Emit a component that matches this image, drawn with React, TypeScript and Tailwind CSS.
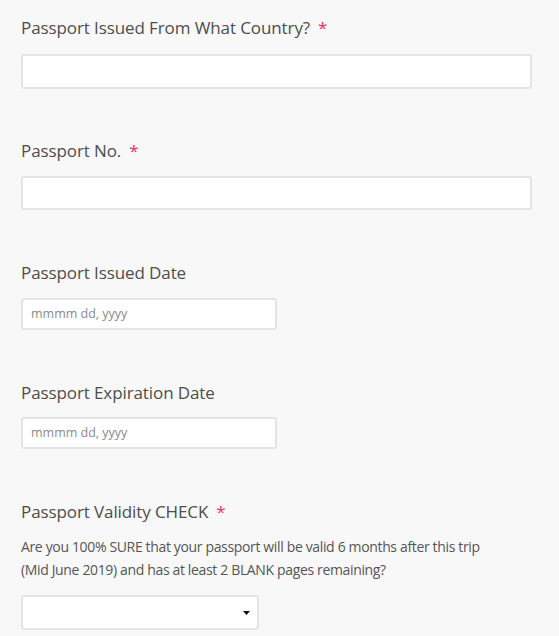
import React from "react";

const font = { fontFamily: '"Open Sans", "Noto Sans", sans-serif' };

function Label({ text, required }: { text: string; required?: boolean }) {
  return (
    <div className="text-[17px] leading-[24px] tracking-[-0.1px] text-[#4d4d4d]">
      {text}
      {required && <span className="ml-[8px] text-[#ec2f67]">*</span>}
    </div>
  );
}

export default function App() {
  return (
    <div className="min-h-[636px] w-full bg-[#f8f8f8] pl-[21px] pr-[27px] pt-[16px]" style={font}>
      <Label text="Passport Issued From What Country?" required />
      <div className="mt-[14px] h-[35px] w-full rounded-[3px] border-2 border-[#e4e4e4] bg-white" />

      <div className="mt-[50px]">
        <Label text="Passport No." required />
      </div>
      <div className="mt-[13px] h-[34px] w-full rounded-[3px] border-2 border-[#e4e4e4] bg-white" />

      <div className="mt-[51px]">
        <Label text="Passport Issued Date" />
      </div>
      <div className="mt-[13px] flex h-[32px] w-[256px] items-center rounded-[3px] border-2 border-[#e4e4e4] bg-white pl-[8px] text-[12.5px] text-[#8a8a8a]">
        mmmm dd, yyyy
      </div>

      <div className="mt-[51px]">
        <Label text="Passport Expiration Date" />
      </div>
      <div className="mt-[12px] flex h-[32px] w-[256px] items-center rounded-[3px] border-2 border-[#e4e4e4] bg-white pl-[8px] text-[12.5px] text-[#8a8a8a]">
        mmmm dd, yyyy
      </div>

      <div className="mt-[51px]">
        <Label text="Passport Validity CHECK" required />
      </div>
      <div className="mt-[11px] text-[14px] leading-[23px] tracking-[-0.35px] text-[#555]">
        Are you 100% SURE that your passport will be valid 6 months after this trip
        <br />
        (Mid June 2019) and has at least 2 BLANK pages remaining?
      </div>
      <div className="mt-[14px] flex h-[35px] w-[238px] items-center justify-end rounded-[3px] border-2 border-[#e4e4e4] bg-white pr-[7px]">
        <svg width="7" height="4" viewBox="0 0 7 4">
          <path d="M0 0 H7 L3.5 4 Z" fill="#111" />
        </svg>
      </div>
    </div>
  );
}
